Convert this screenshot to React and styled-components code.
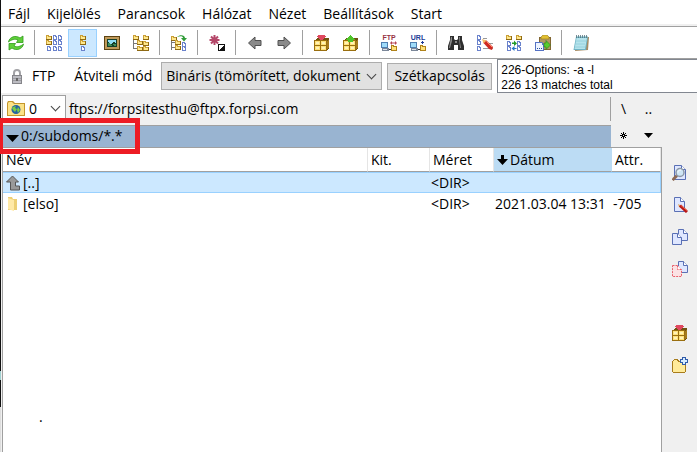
import React from 'react';
import styled, { createGlobalStyle } from 'styled-components';

const MENU = ['Fájl', 'Kijelölés', 'Parancsok', 'Hálózat', 'Nézet', 'Beállítások', 'Start'];

const Folder = ({ x, y }) => (
  <g shapeRendering="crispEdges">
    <path d={`M${x} ${y}h3v1h3v4h-6z`} fill="#8f6a14" />
    <path d={`M${x} ${y}h3v1h2v3h-5z`} fill="#c99f36" />
    <path d={`M${x + 1} ${y + 1}h1v1h3v2h-4z`} fill="#ffe88c" />
  </g>
);

const FileBox = ({ x, y }) => (
  <g shapeRendering="crispEdges">
    <path d={`M${x} ${y}h3v1h1v4h-4z`} fill="#6a82cc" />
    <path d={`M${x + 1} ${y + 1}h1v1h1v2h-2z`} fill="#fff" />
  </g>
);

const Crate = ({ arrow, up }) => (
  <g shapeRendering="crispEdges">
    <path d="M3 3h12v11h-1v1h-2V6H2V4h1z" fill="#6f5210" />
    <path d="M13 6h1v8h-1zM14 5h1v8h-1z" fill="#a57b1d" />
    <path d="M0 5h13v11H0z" fill="#9a6f10" />
    <path d="M1 6h5v4H1zM7 6h5v4H7zM1 11h5v4H1zM7 11h5v4H7z" fill="#ffe27a" />
    <path d="M2 7h3v2H2zM8 7h3v2H8zM2 12h3v2H2zM8 12h3v2H8z" fill="#fff2b8" />
    {up ? (
      <path d="M7 0h1v1h1v1h1v1h1v1h1v1h-2v2H5V5H3V4h1V3h1V2h1V1h1z" fill={arrow} />
    ) : (
      <path d="M4 0h7v1h1v1h-1v1h-1v1H9v1H6V4H5V3H4V2H3V1h1z" fill={arrow} />
    )}
  </g>
);

const Page = ({ x, y, w, h, stroke = '#5a70b5', fill = '#dfe7ff', dash }) => (
  <g fill={fill} stroke={stroke} strokeDasharray={dash}>
    <path d={`M${x} ${y}h${w - 4}l4 4v${h - 4}h-${w}z`} />
    <path d={`M${x + w - 4} ${y}v4h4`} fill="#fff" />
  </g>
);

const Network = () => (
  <g shapeRendering="crispEdges">
    <path d="M0 7h7v6H0z" fill="#4f7fb0" />
    <path d="M1 8h5v4H1z" fill="#9fdcfa" />
    <path d="M1 13h7v3H1z" fill="#7b8799" />
    <path d="M2 14h4v1H2z" fill="#dde3ea" />
    <path d="M8 14h2v1H8z" fill="#333" />
    <path d="M10 10h3v1h3v5h-6z" fill="#b0821a" />
    <path d="M11 11h1v1h3v3h-4z" fill="#ffe27a" />
  </g>
);

const ICONS = {
  refresh: (
    <g fill="#5fd03a" stroke="#2f9a1b" strokeWidth=".8">
      <path d="M.5 7C1.500 1.500 8 0 12 3l3-2v6.500H8.500L10 5C7 3.500 3.500 4.500.5 7z" />
      <path d="M15.500 9c-1 5.500-7.500 7-11.500 4l-3 2V8.500h6.500L6 11c3 1.500 6.500.5 9.500-2z" />
    </g>
  ),
  brief: (
    <>
      <Folder x={0} y={0} />
      <Folder x={0} y={5} />
      <FileBox x={1} y={11} />
      {[0, 5, 11].map((y) => (
        <g key={y}>
          <FileBox x={7} y={y} />
          <FileBox x={12} y={y} />
        </g>
      ))}
    </>
  ),
  full: (
    <>
      <Folder x={5} y={0} />
      <Folder x={5} y={5} />
      <FileBox x={6} y={11} />
    </>
  ),
  image: (
    <g shapeRendering="crispEdges">
      <path d="M0 1h16v14H0z" fill="#5d4312" />
      <path d="M1 2h14v12H1z" fill="#c09a5a" />
      <path d="M3 4h10v8H3z" fill="#15402a" />
      <path d="M4 5h8v3l-3-1-2 2-3-2z" fill="#8fdcf5" />
      <path d="M4 8h2v1h1v1h1v1H4zM9 9h3v2h-2v-1H9z" fill="#3f8c58" />
    </g>
  ),
  tree: (
    <>
      <path d="M.5 4v10M1 8.500h3M1 13.500h3" stroke="#777" fill="none" />
      <Folder x={0} y={0} />
      <Folder x={10} y={0} />
      <Folder x={4} y={5} />
      <Folder x={10} y={6} />
      <Folder x={4} y={11} />
      <Folder x={10} y={11} />
    </>
  ),
  branch: (
    <>
      <path d="M.5 1v14M1 7.500h3M1 12.500h3" stroke="#777" fill="none" />
      <Folder x={0} y={1} />
      <Folder x={4} y={5} />
      <Folder x={4} y={10} />
      <FileBox x={11} y={7} />
      <FileBox x={11} y={11} />
      <path d="M6 2c3-3 8-2 8 1h2l-3 3.500L10 3h2c0-2-3-2-6-1z" fill="#2f9c38" />
    </>
  ),
  star: (
    <>
      <path d="M5.500 0v10M.5 5h10M2 1.500l7 7M9 1.500l-7 7" stroke="#b5486a" strokeWidth="2" />
      <g shapeRendering="crispEdges">
        <path d="M9 9h7v7H9z" fill="#111" />
        <path d="M10 10h5v1h-1v1h-1v1h-1v1h-1v1h-1z" fill="#fff" />
      </g>
    </>
  ),
  back: <path d="M1.500 8L8 2v3.500h6v5H8V14z" fill="#8a8a8a" stroke="#505050" />,
  forward: <path d="M14.500 8L8 2v3.500H2v5h6V14z" fill="#8a8a8a" stroke="#505050" />,
  pack: <Crate arrow="#e0485f" />,
  unpack: <Crate arrow="#4fc42a" up />,
  ftp: (
    <>
      <Caption x="8" y="5" fill="#983344">FTP</Caption>
      <Network />
      <path d="M9 8l2-2v1.500h3V6l2 2-2 2V8.500h-3V10z" fill="#b54552" />
    </>
  ),
  url: (
    <>
      <Caption x="8" y="5" fill="#203c96">URL</Caption>
      <Network />
      <path d="M12 6h1v1h1v1h-1v1h-1V8h-1V7h1z" fill="#203c96" shapeRendering="crispEdges" />
    </>
  ),
  search: (
    <>
      <path d="M2 1h4v3l1 1h2l1-1V1h4v4l2 6v4h-6v-5H6v5H0v-4l2-6z" fill="#2e2e2e" />
      <path d="M3 2h1v4L2 13H1zM11 2h1v5l1 6h-1zM7 6h2v2H7z" fill="#8a8a8a" />
    </>
  ),
  rename: (
    <>
      <FileBox x={0} y={0} />
      <FileBox x={0} y={5} />
      <FileBox x={0} y={11} />
      <path d="M6 3.500h4M10 8.500h6M6 13.500h10" stroke="#9a9a9a" />
      <path d="M6 5l3.500.5L16 12l-1 3-3-1L6.500 8z" fill="#cf2a22" />
      <path d="M5 4l4.500 1.500-3 3z" fill="#f4bb68" />
      <path d="M9.500 6.500l5.500 5.500" stroke="#ff8b69" />
    </>
  ),
  sync: (
    <>
      <Folder x={0} y={0} />
      <Folder x={10} y={0} />
      <FileBox x={1} y={6} />
      <FileBox x={1} y={11} />
      <FileBox x={11} y={6} />
      <FileBox x={11} y={11} />
      <path d="M6 7.500h2V5.500l3 3-3 2.500V9H6z" fill="#249c2a" />
      <path d="M10.500 13H8.500v-2l-3 2.500 3 2.500v-2h2z" fill="#2879c7" />
    </>
  ),
  clipboard: (
    <>
      <path d="M4 2h12v13H4z" fill="#826632" />
      <path d="M5 3h10v11H5z" fill="#b39a63" />
      <path d="M6 2l2-2h4l2 2v2H6z" fill="#e1bf33" stroke="#96791c" strokeWidth=".6" />
      <path d="M0 7h7l2 2v7H0z" fill="#5572c4" />
      <path d="M1 8h6v2h1v5H1z" fill="#edf4ff" />
      <path d="M2 13h1v1H2zM4 13h1v1H4zM6 13h1v1H6z" fill="#274c97" />
      <path d="M9 8h2V5.500L15.500 10 11 14.500V12H9z" fill="#58cc2c" stroke="#257e1b" strokeWidth=".6" />
    </>
  ),
  notepad: (
    <>
      <path d="M4 2h12l-1 13-13 1z" fill="#a88b62" />
      <path d="M3 1.500h12L13 15H.5z" fill="#6fb3c4" />
      <path d="M3.500 3H14l-2 11H1.500z" fill="#b5e3ec" />
      <path d="M3 6h10M3 9h9M2 12h10" stroke="#8fcddb" strokeWidth=".8" />
      <path d="M3.500 0v3M5.500 0v3M7.500 0v3M9.500 0v3M11.500 0v3M13.500 0v3" stroke="#56747d" strokeWidth=".8" />
    </>
  ),
  view: (
    <>
      <Page x={2.5} y={0.5} w={11} h={14} />
      <path d="M5 10.500L.5 15" stroke="#8d6a55" strokeWidth="3" />
      <circle cx="8" cy="7.500" r="4" fill="#cfe6f5" stroke="#8b97a6" strokeWidth="1.500" />
      <path d="M6 7.500c0-2 1-2.500 3-2.500" stroke="#fff" fill="none" />
    </>
  ),
  edit: (
    <>
      <Page x={2.5} y={0.5} w={10} h={14} />
      <path d="M6 7l1 3 2 1-1-3z" fill="#e5a64e" />
      <path d="M8 8.500l7 6.500" stroke="#b91616" strokeWidth="3" />
      <path d="M9 8.500l6 5" stroke="#f16843" />
    </>
  ),
  copy: (
    <>
      <Page x={6.5} y={0.5} w={9} h={11} />
      <Page x={0.5} y={4.5} w={9} h={11} />
    </>
  ),
  move: (
    <>
      <Page x={6.5} y={0.5} w={9} h={11} />
      <Page x={0.5} y={4.5} w={9} h={11} stroke="#e8606c" fill="#fbe2e4" dash="2 1" />
    </>
  ),
  newFolder: (
    <g shapeRendering="crispEdges">
      <path d="M0 4h1V3h1V2h4v1h1v1h7v11h-1v1H1v-1H0z" fill="#a87c1c" />
      <path d="M1 4h1V3h3v1h1v1h7v10H1z" fill="#ffeb9a" />
      <path d="M10 0h4v2h2v4h-2v2h-4V6H8V2h2z" fill="#315ca9" />
      <path d="M11 1h2v2h2v2h-2v2h-2V5H9V3h2z" fill="#d6ecff" />
    </g>
  ),
  lock: (
    <>
      <path d="M5 8V5a3 3 0 016 0v3" fill="none" stroke="#a2a2a6" strokeWidth="2" />
      <path d="M3 7h10v9H3z" fill="#85858a" />
      <path d="M4 8h8v7H4z" fill="#bcbcc2" />
      <path d="M4 10.500h8M4 12.500h8" stroke="#9c9ca2" />
      <path d="M7 10h2v3H7z" fill="#666" />
    </>
  ),
  netDrive: (
    <>
      <path d="M0 2l1-2h5l2 2h10v13H0z" fill="#c4962c" />
      <path d="M1 2l1-1h3l2 2h10v11H1z" fill="#fbe287" />
      <circle cx="9" cy="8.500" r="4.500" fill="#2463a2" />
      <path d="M6 6l3-1-1 2 2 1-2 3-2-2-1-2zM11 6l2 3-2 3-1-3z" fill="#78cc45" />
    </>
  ),
  parent: <path d="M6.500 1L12.500 7H9.500v4h4v4h-9V7h-4z" fill="#999" stroke="#555" />,
  folder: (
    <>
      <path d="M2 1h4l1 2h4v11H2z" fill="#edcf74" />
      <path d="M2 2l6 2v11l-6-2z" fill="#ffe9a6" />
    </>
  ),
};

const TOOLS = [
  ['refresh', 'Frissítés'], null,
  ['brief', 'Rövid nézet'], ['full', 'Teljes nézet'], ['image', 'Miniatűrök'], ['tree', 'Fa'], null,
  ['branch', 'Ágnézet'], null,
  ['star', 'Kijelölés megfordítása'], null,
  ['back', 'Vissza'], ['forward', 'Előre'], null,
  ['pack', 'Becsomagolás'], ['unpack', 'Kicsomagolás'], null,
  ['ftp', 'FTP kapcsolat'], ['url', 'URL kapcsolat'], null,
  ['search', 'Keresés'], ['rename', 'Átnevezés'], ['sync', 'Szinkronizálás'], ['clipboard', 'Vágólap'], null,
  ['notepad', 'Jegyzettömb'],
];

const SIDE_TOP = [['view', 'Nézőke'], ['edit', 'Szerkesztés'], ['copy', 'Másolás'], ['move', 'Áthelyezés']];
const SIDE_BOTTOM = [['pack', 'Tömörítés'], ['newFolder', 'Új mappa']];

const Icon = ({ name, width = 16 }) => (
  <Svg viewBox={`0 0 ${width} 16`} $width={width} aria-hidden="true">
    {ICONS[name]}
  </Svg>
);

function Caption({ x, y, fill, children }) {
  return (
    <text x={x} y={y} fill={fill} textAnchor="middle" fontFamily="Liberation Sans, sans-serif" fontSize="7" fontWeight="bold">
      {children}
    </text>
  );
}

const App = () => (
  <>
    <GlobalStyle />
    <Shell>
      <Edge />
      <Window>
        <Menu>
          {MENU.map((item) => (
            <MenuItem key={item}>{item}</MenuItem>
          ))}
        </Menu>
        <Toolbar>
          {TOOLS.map((tool, i) =>
            tool ? (
              <Tool key={tool[0]} aria-label={tool[1]} $active={tool[0] === 'full'}>
                <Icon name={tool[0]} />
              </Tool>
            ) : (
              <Separator key={i} />
            )
          )}
        </Toolbar>
        <FtpBar>
          <Icon name="lock" />
          <FtpName>FTP</FtpName>
          <ModeLabel htmlFor="mode">Átviteli mód</ModeLabel>
          <SelectBox>
            <ModeSelect id="mode">
              <option>Bináris (tömörített, dokumentumok)</option>
            </ModeSelect>
            <Chevron />
          </SelectBox>
          <Disconnect>Szétkapcsolás</Disconnect>
          <Log>
            226-Options: -a -l
            <br />
            226 13 matches total
          </Log>
        </FtpBar>
        <Body>
          <Panel>
            <DriveRow>
              <DriveBox>
                <Icon name="netDrive" width={18} />
                <DriveSelect aria-label="Meghajtó">
                  <option>0</option>
                </DriveSelect>
                <Chevron />
              </DriveBox>
              <Address>ftps://forpsitesthu@ftpx.forpsi.com</Address>
              <RootButtons>
                <Flat>\</Flat>
                <Flat>..</Flat>
              </RootButtons>
            </DriveRow>
            <PathRow>
              <Path>
                <Glyph viewBox="0 0 13 11" $width={13}>
                  <path d="M0 4h13L6.500 11z" />
                </Glyph>
                0:/subdoms/*.*
                <Highlight />
              </Path>
              <PathButtons>
                <Flat aria-label="Kedvencek">
                  <Glyph viewBox="0 0 7 7" $width={7} shapeRendering="crispEdges">
                    <path d="M3 0h1v7H3zM0 3h7v1H0zM1 1h1v1H1zM5 1h1v1H5zM1 5h1v1H1zM5 5h1v1H5zM2 2h3v3H2z" />
                    <path d="M3 3h1v1H3z" fill="#f0f0f0" />
                  </Glyph>
                </Flat>
                <Flat aria-label="Előzmények">
                  <Glyph viewBox="0 0 9 5" $width={9}>
                    <path d="M0 0h9L4.500 5z" />
                  </Glyph>
                </Flat>
              </PathButtons>
            </PathRow>
            <Files>
              <FileTable>
                <colgroup>
                  <col />
                  <Col $width={62} />
                  <Col $width={64} />
                  <Col $width={118} />
                  <Col $width={49} />
                </colgroup>
                <thead>
                  <tr>
                    <Th>Név</Th>
                    <Th>Kit.</Th>
                    <Th>Méret</Th>
                    <Th $sorted>
                      <Glyph viewBox="0 0 11 10" $width={11}>
                        <path d="M4 0h3v4h4L5.500 10 0 4h4z" />
                      </Glyph>
                      Dátum
                    </Th>
                    <Th>Attr.</Th>
                  </tr>
                </thead>
                <tbody>
                  <Row $selected>
                    <td><Name><Icon name="parent" width={14} />[..]</Name></td>
                    <td />
                    <td>&lt;DIR&gt;</td>
                    <td />
                    <td />
                  </Row>
                  <Row>
                    <td><Name><Icon name="folder" width={14} />[elso]</Name></td>
                    <td />
                    <td>&lt;DIR&gt;</td>
                    <td>2021.03.04 13:31</td>
                    <td>-705</td>
                  </Row>
                </tbody>
              </FileTable>
              <Mark>.</Mark>
            </Files>
          </Panel>
          <SideBar>
            {[SIDE_TOP, SIDE_BOTTOM].map((group, i) => (
              <SideGroup key={i}>
                {group.map(([name, label]) => (
                  <SideTool key={name} aria-label={label}>
                    <Icon name={name} />
                  </SideTool>
                ))}
              </SideGroup>
            ))}
          </SideBar>
        </Body>
      </Window>
    </Shell>
  </>
);

export default App;

const GlobalStyle = createGlobalStyle`
  * {
    box-sizing: border-box;
  }

  body {
    margin: 0;
    background: #fff;
    color: #000;
    font-family: 'Open Sans', 'Noto Sans', sans-serif;
    font-size: 14px;
    line-height: 20px;
  }

  button, select {
    font: inherit;
    color: inherit;
    margin: 0;
  }
`;

const Shell = styled.div`
  display: flex;
  min-height: 100vh;
`;

const Edge = styled.div`
  width: 1px;
  background: linear-gradient(#111 82%, #9fd0d0 82%, #9fd0d0 84%, #111 84%, #111 90%, #ddd 90%);
`;

const Window = styled.div`
  flex: 1;
  min-width: 0;
  display: flex;
  flex-direction: column;
`;

const Menu = styled.nav`
  display: flex;
  gap: 17px;
  height: 26px;
  padding: 4px 7px 0;
  border-bottom: 2px solid #f0f0f0;
`;

const MenuItem = styled.button`
  border: 0;
  padding: 0;
  background: none;
`;

const Toolbar = styled.div`
  display: flex;
  align-items: center;
  height: 33px;
  border-top: 1px solid #a0a0a0;
  border-bottom: 1px solid #a0a0a0;
`;

const Tool = styled.button`
  display: flex;
  align-items: center;
  justify-content: center;
  width: 29px;
  height: 28px;
  padding: 0;
  border: 1px solid ${(p) => (p.$active ? '#99d1ff' : 'transparent')};
  background: ${(p) => (p.$active ? '#cce8ff' : 'none')};
`;

const Separator = styled.span`
  width: 1px;
  height: 25px;
  margin: 0 4px;
  background: #a0a0a0;
`;

const Svg = styled.svg`
  display: block;
  flex: none;
  width: ${(p) => p.$width}px;
  height: 16px;
`;

const FtpBar = styled.div`
  display: flex;
  align-items: center;
  height: 34px;
  padding-left: 8px;
`;

const FtpName = styled.span`
  margin: 0 19px 0 7px;
`;

const ModeLabel = styled.label`
  margin-right: 9px;
`;

const SelectBox = styled.div`
  display: flex;
  align-items: center;
  width: 221px;
  height: 28px;
  padding: 0 5px 0 4px;
  border: 1px solid #adadad;
  background: #e1e1e1;
`;

const ModeSelect = styled.select`
  appearance: none;
  flex: 1;
  min-width: 0;
  padding: 0;
  border: 0;
  background: none;
`;

const Chevron = styled.span`
  flex: none;
  width: 7px;
  height: 7px;
  margin: 0 1px 4px 7px;
  border: solid #444;
  border-width: 0 1px 1px 0;
  transform: rotate(45deg);
`;

const Disconnect = styled.button`
  width: 105px;
  height: 27px;
  margin: 0 5px;
  padding: 0;
  border: 1px solid #adadad;
  background: #e1e1e1;
`;

const Log = styled.div`
  flex: 1;
  align-self: stretch;
  padding: 3px 3px 0;
  border: solid #828790;
  border-width: 1px 0 1px 1px;
  font: 12px/15px 'Liberation Sans', Arial, sans-serif;
  white-space: nowrap;
`;

const Body = styled.div`
  flex: 1;
  display: flex;
  padding-left: 1px;
  background: #f0f0f0;
`;

const Panel = styled.main`
  flex: 1;
  min-width: 0;
  display: flex;
  flex-direction: column;
`;

const DriveRow = styled.div`
  display: flex;
  align-items: center;
  height: 31px;
  gap: 3px;
`;

const DriveBox = styled.div`
  display: flex;
  align-items: center;
  width: 64px;
  height: 28px;
  padding: 0 5px 0 4px;
  border: 1px solid #a0a0a0;
  background: #fff;
`;

const DriveSelect = styled.select`
  appearance: none;
  flex: 1;
  min-width: 0;
  padding: 0 0 0 4px;
  border: 0;
  background: none;
`;

const Address = styled.span`
  flex: 1;
`;

const RootButtons = styled.div`
  display: flex;
  width: 52px;
  height: 24px;
  border-left: 1px solid #a0a0a0;
`;

const PathRow = styled.div`
  display: flex;
  align-items: center;
  height: 23px;
`;

const Path = styled.div`
  position: relative;
  flex: 1;
  display: flex;
  align-items: center;
  height: 22px;
  gap: 2px;
  padding-left: 4px;
  border-top: 1px solid #a0a0a0;
  background: #99b4d1;
`;

const Highlight = styled.span`
  position: absolute;
  left: -4px;
  top: -8px;
  width: 142px;
  height: 36px;
  border: 5px solid #ed1c24;
`;

const PathButtons = styled.div`
  display: flex;
  width: 51px;
`;

const Flat = styled.button`
  display: flex;
  align-items: center;
  justify-content: center;
  width: 25px;
  padding: 0;
  border: 0;
  background: none;
`;

const Glyph = styled.svg`
  flex: none;
  width: ${(p) => p.$width}px;
`;

const Files = styled.div`
  flex: 1;
  border: 1px solid #a0a0a0;
  border-bottom: 0;
  background: #fff;
`;

const FileTable = styled.table`
  width: 100%;
  table-layout: fixed;
  border-collapse: separate;
  border-spacing: 0;
  line-height: 19px;

  td {
    height: 21px;
    padding: 0 1px;
    white-space: nowrap;
  }
`;

const Col = styled.col`
  width: ${(p) => p.$width}px;
`;

const Th = styled.th`
  height: 24px;
  padding: 0 3px;
  border-bottom: 1px solid #a0a0a0;
  border-right: 1px solid ${(p) => (p.$sorted ? '#bcdcf4' : '#e5e5e5')};
  background: ${(p) => (p.$sorted ? '#bcdcf4' : '#fff')};
  font-weight: normal;
  text-align: left;

  svg {
    margin-right: 2px;
  }
`;

const Row = styled.tr`
  td {
    background: ${(p) => (p.$selected ? '#cce8ff' : '#fff')};
    border: solid ${(p) => (p.$selected ? '#99d1ff' : '#fff')};
    border-width: 1px 0;
  }

  td:last-child {
    border-right-width: 1px;
  }
`;

const Name = styled.span`
  display: flex;
  align-items: center;
  gap: 3px;
  padding-left: 2px;
`;

const Mark = styled.div`
  padding: 193px 0 0 36px;
`;

const SideBar = styled.aside`
  display: flex;
  flex-direction: column;
  gap: 32px;
  width: 35px;
  padding-top: 64px;
`;

const SideGroup = styled.div`
  display: flex;
  flex-direction: column;
  align-items: center;
`;

const SideTool = styled.button`
  display: flex;
  align-items: center;
  height: 32px;
  padding: 0;
  border: 0;
  background: none;
`;
